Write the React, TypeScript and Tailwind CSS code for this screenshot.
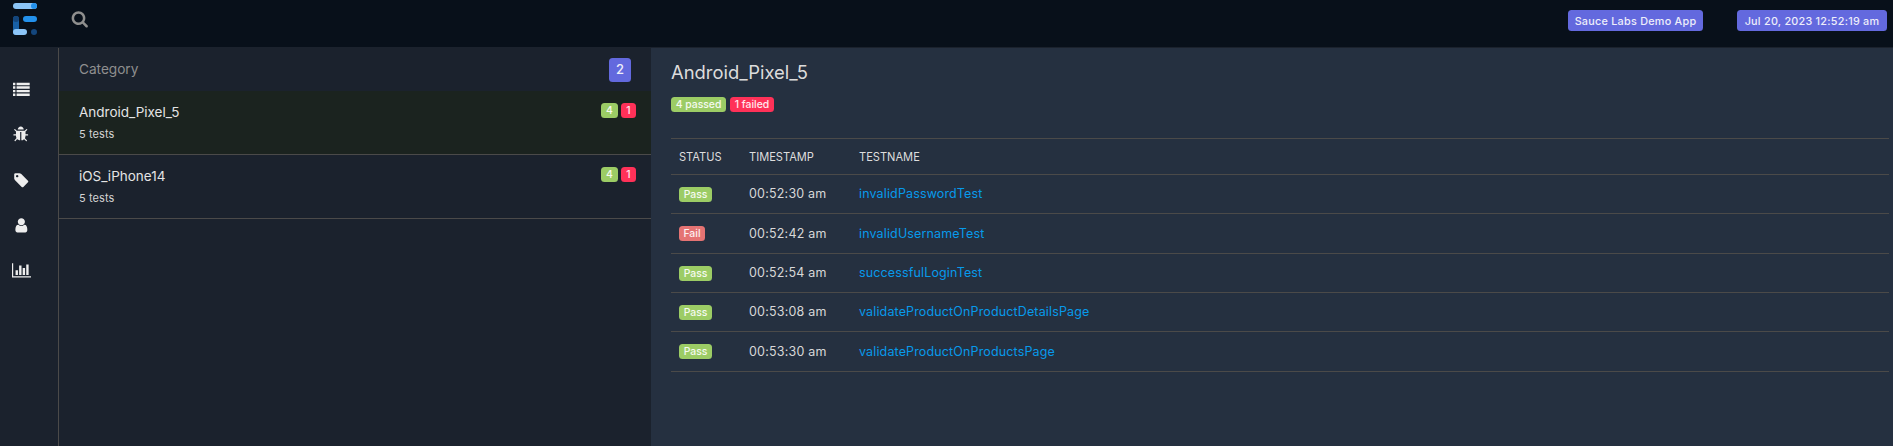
import type { ReactNode } from "react";

function Glyph({ d, size, wide = 1792 }: { d: string; size: string; wide?: number }) {
  return (
    <svg viewBox={`0 0 ${wide} 1792`} className={`${size} shrink-0`} fill="currentColor">
      <path d={d} />
    </svg>
  );
}

const SEARCH =
  "M1216 832q0-185-131.5-316.5t-316.5-131.5-316.5 131.5-131.5 316.5 131.5 316.5 316.5 131.5 316.5-131.5 131.5-316.5zm512 832q0 52-38 90t-90 38q-54 0-90-38l-343-342q-179 124-399 124-143 0-273.5-55.5t-225-150-150-225-55.5-273.5 55.5-273.5 150-225 225-150 273.5-55.5 273.5 55.5 225 150 150 225 55.5 273.5q0 220-124 399l343 343q37 37 37 90z";
const LIST =
  "M0 192h256v256h-256zM384 192h1408v256h-1408zM0 576h256v256h-256zM384 576h1408v256h-1408zM0 960h256v256h-256zM384 960h1408v256h-1408zM0 1344h256v256h-256zM384 1344h1408v256h-1408z";
const BUG =
  "M1632 960q0 26-19 45t-45 19h-224q0 171-67 290l208 209q19 19 19 45t-19 45q-18 19-45 19t-45-19l-198-197q-5 5-15 13t-42 28.5-65 36.5-82 29-97 13v-896h-128v896q-51 0-101.5-13.5t-87-33-66-39-43.5-32.5l-15-14-183 207q-20 21-48 21-24 0-43-16-19-18-20.5-44.5t15.5-46.5l202-227q-58-114-58-274h-224q-26 0-45-19t-19-45 19-45 45-19h224v-294l-173-173q-19-19-19-45t19-45 45-19 45 19l173 173h844l173-173q19-19 45-19t45 19 19 45-19 45l-173 173v294h224q26 0 45 19t19 45zm-480-576h-640q0-133 93.5-226.5t226.5-93.5 226.5 93.5 93.5 226.5z";
const TAG =
  "M576 448q0-53-37.5-90.5t-90.5-37.5-90.5 37.5-37.5 90.5 37.5 90.5 90.5 37.5 90.5-37.5 37.5-90.5zm1067 576q0 53-37 90l-491 492q-39 37-91 37-53 0-90-37l-715-716q-38-37-64.5-101t-26.5-117v-416q0-52 38-90t90-38h416q53 0 117 26.5t102 64.5l715 714q37 39 37 91z";
const USER =
  "M1536 1399q0 109-62.5 187t-150.5 78h-854q-88 0-150.5-78t-62.5-187q0-85 8.5-160.5t31.5-152 58.5-131 94-89 134.5-34.5q131 128 313 128t313-128q76 0 134.5 34.5t94 89 58.5 131 31.5 152 8.5 160.5zm-256-887q0 159-112.5 271.5t-271.5 112.5-271.5-112.5-112.5-271.5 112.5-271.5 271.5-112.5 271.5 112.5 112.5 271.5z";
const CHART =
  "M640 896v512h-256v-512h256zm384-512v1024h-256v-1024h256zm1024 1152v128h-2048v-1536h128v1408h1920zm-640-896v768h-256v-768h256zm384-384v1152h-256v-1152h256z";

function Logo() {
  return (
    <svg viewBox="0 0 24 32" className="h-8 w-6 shrink-0">
      <rect width="24" height="6" rx="3" fill="#8cc5f7" />
      <circle cx="21" cy="3" r="3" fill="#2391ec" />
      <rect y="13" width="6" height="19" rx="3" fill="#1860a6" />
      <circle cx="3" cy="16" r="3" fill="#14467c" />
      <rect x="10" y="13" width="14" height="6" rx="3" fill="#2391ec" />
      <rect y="26" width="14" height="6" rx="3" fill="#8cc5f7" />
      <circle cx="21" cy="29" r="3" fill="#14467c" />
    </svg>
  );
}

const TONES = { green: "bg-[#9ccc65]", red: "bg-[#ff3158]", coral: "bg-[#e57373]" };

function Badge({ tone, className = "", children }: { tone: keyof typeof TONES; className?: string; children: ReactNode }) {
  return (
    <span className={`flex h-[15px] items-center justify-center rounded-[3.5px] pt-px text-[10.4px] font-medium text-white/90 ${TONES[tone]} ${className}`}>
      {children}
    </span>
  );
}

function HeaderTag({ className, children }: { className: string; children: ReactNode }) {
  return (
    <span className={`flex h-[21px] items-center justify-center rounded-[3.5px] bg-[#6369de] pt-[3px] text-[10.8px] font-medium tracking-[0.26px] text-[#eeeefa] ${className}`}>
      {children}
    </span>
  );
}

function Category({ name, active = false }: { name: string; active?: boolean }) {
  return (
    <li className={`flex h-16 justify-between border-b border-[#4b4a49] pr-[15px] pl-5 ${active ? "bg-[#1b231f]" : ""}`}>
      <div className="pt-[11px]">
        <p className="text-[13.5px] leading-5 text-[#e4e4e4]">{name}</p>
        <p className="mt-1 text-[11px] leading-4 tracking-[0.1px] text-[#d4d4d4]">5 tests</p>
      </div>
      <div className="flex gap-[3px] pt-3">
        <Badge tone="green" className="w-[17px]">4</Badge>
        <Badge tone="red" className="w-[15px]">1</Badge>
      </div>
    </li>
  );
}

const TESTS = [
  { pass: true, time: "00:52:30 am", name: "invalidPasswordTest", height: "h-[39px]" },
  { pass: false, time: "00:52:42 am", name: "invalidUsernameTest", height: "h-10" },
  { pass: true, time: "00:52:54 am", name: "successfulLoginTest", height: "h-[39px]" },
  { pass: true, time: "00:53:08 am", name: "validateProductOnProductDetailsPage", height: "h-[39px]" },
  { pass: true, time: "00:53:30 am", name: "validateProductOnProductsPage", height: "h-10" },
];

export default function App() {
  return (
    <div className="flex h-[446px] w-full flex-col overflow-hidden bg-[#1b222d] font-['Inter',sans-serif]">
      <header className="flex h-[47px] shrink-0 items-start bg-[#08101a] pr-1.5 pl-[13px]">
        <div className="pt-[3px]"><Logo /></div>
        <div className="pt-2.5 pl-[34px] text-[#8f8f8e]"><Glyph d={SEARCH} size="size-[17.5px]" /></div>
        <div className="ml-auto flex gap-[34px] pt-2.5">
          <HeaderTag className="w-[135px]">Sauce Labs Demo App</HeaderTag>
          <HeaderTag className="w-[150px]">Jul 20, 2023 12:52:19 am</HeaderTag>
        </div>
      </header>
      <div className="flex min-h-0 flex-1">
        <nav className="mt-px flex w-[59px] shrink-0 flex-col items-center gap-[28.6px] border-r border-[#4b4a49] pt-[33px] pr-[15px] text-[#eeeeee]">
          <Glyph d={LIST} size="size-[16.7px]" />
          <Glyph d={BUG} size="size-[16.7px]" />
          <Glyph d={TAG} size="size-[16.7px]" />
          <Glyph d={USER} size="size-[16.7px]" />
          <Glyph d={CHART} size="h-[16.7px] w-[19px]" wide={2048} />
        </nav>
        <aside className="w-[592px] shrink-0">
          <div className="flex h-11 items-start justify-between pr-5 pl-5">
            <h2 className="pt-3 text-[13.7px] leading-5 tracking-[-0.05px] text-[#8f8f8f]">Category</h2>
            <span className="mt-[11px] flex h-6 w-[22px] items-center justify-center rounded-[3.5px] bg-[#6369de] text-[13px] font-medium text-[#eeeefa]">2</span>
          </div>
          <ul>
            <Category name="Android_Pixel_5" active />
            <Category name="iOS_iPhone14" />
          </ul>
        </aside>
        <main className="mt-px flex-1 bg-[#253040] pr-1 pl-5">
          <h1 className="pt-3 text-[18.4px] leading-6 text-[#dcdcdc]">Android_Pixel_5</h1>
          <div className="mt-[13px] flex gap-1">
            <Badge tone="green" className="w-[55px]">4 passed</Badge>
            <Badge tone="red" className="w-11">1 failed</Badge>
          </div>
          <table className="mt-[26px] w-full table-fixed border-separate border-spacing-0 text-left">
            <thead>
              <tr className="h-[37px] text-[11.1px] text-[#dedede]">
                <th className="w-[70px] border-y border-[#4b4a49] pt-0.5 pl-2 font-normal">STATUS</th>
                <th className="w-[110px] border-y border-[#4b4a49] pt-0.5 pl-2 font-normal">TIMESTAMP</th>
                <th className="border-y border-[#4b4a49] pt-0.5 pl-2 font-normal">TESTNAME</th>
              </tr>
            </thead>
            <tbody>
              {TESTS.map((t) => (
                <tr key={t.name} className={`${t.height} text-[12.5px] leading-5`}>
                  <td className="border-b border-[#4b4a49] pl-2">
                    <Badge tone={t.pass ? "green" : "coral"} className={t.pass ? "w-[33px]" : "w-[26px]"}>{t.pass ? "Pass" : "Fail"}</Badge>
                  </td>
                  <td className="border-b border-[#4b4a49] pl-2 tracking-[0.2px] text-[#d8d8d8]">{t.time}</td>
                  <td className="border-b border-[#4b4a49] pl-2 tracking-[0.14px] text-[#079aeb]">{t.name}</td>
                </tr>
              ))}
            </tbody>
          </table>
        </main>
      </div>
    </div>
  );
}
